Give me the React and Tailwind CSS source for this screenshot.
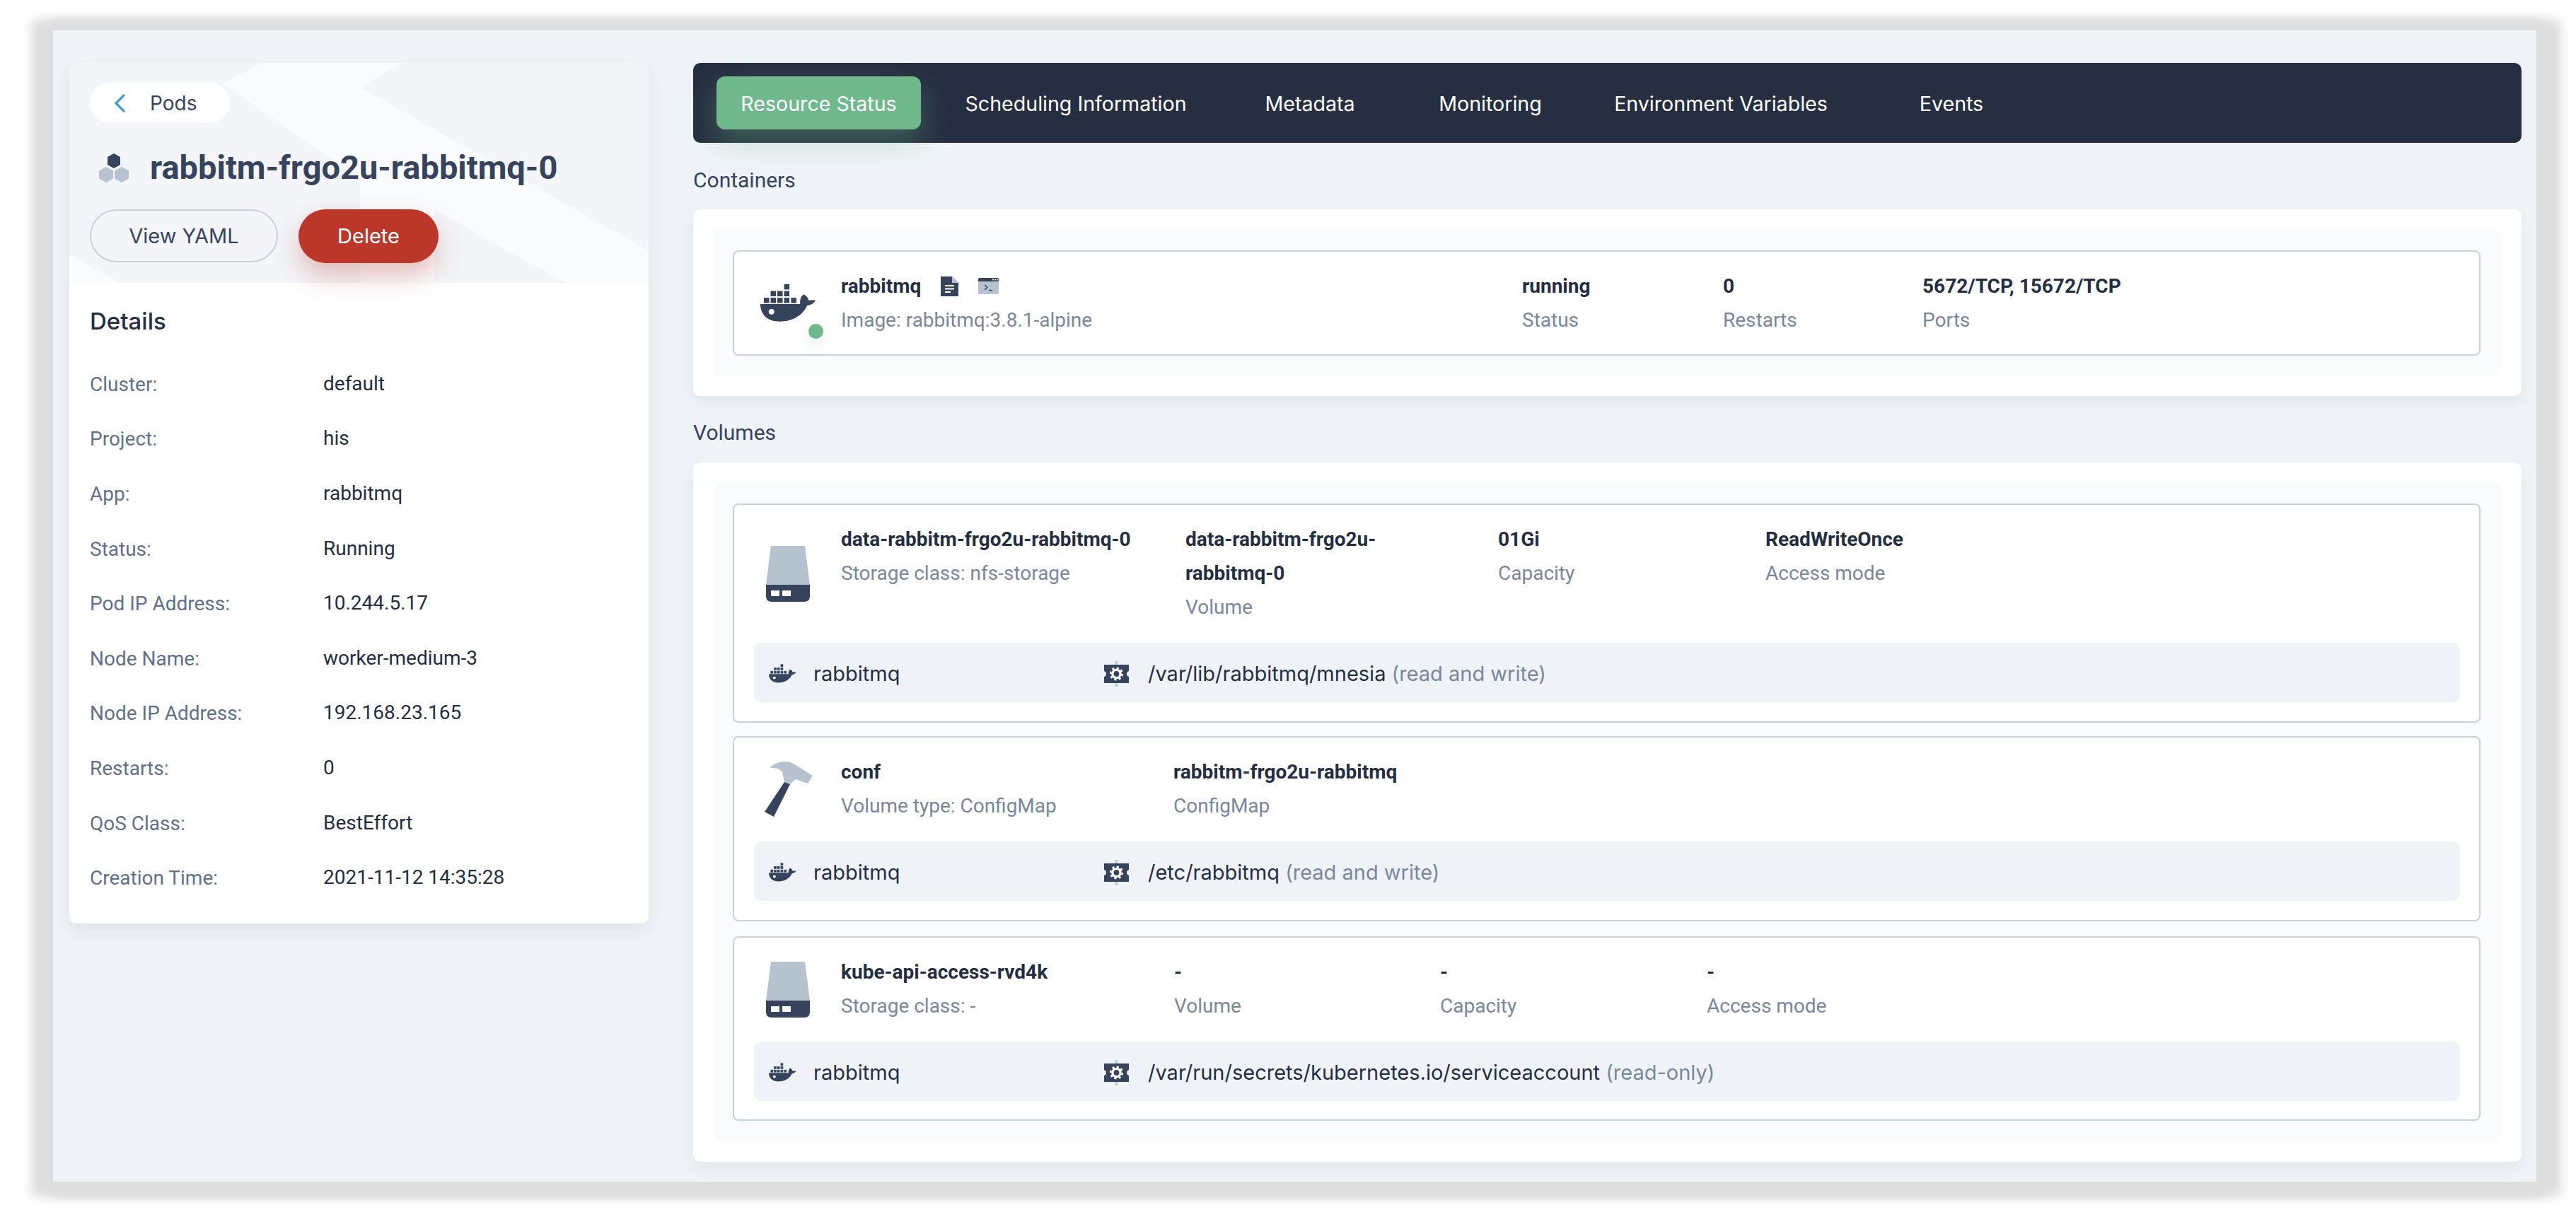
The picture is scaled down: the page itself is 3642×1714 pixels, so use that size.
import React from "react";

const Docker = ({ className }) => (
  <svg viewBox="0 0 80 55" className={className}>
    <g fill="#36435c">
      <rect x="5" y="20" width="7.6" height="7.6" />
      <rect x="14.7" y="20" width="7.6" height="7.6" />
      <rect x="24.3" y="20" width="7.6" height="7.6" />
      <rect x="34" y="20" width="7.6" height="7.6" />
      <rect x="44" y="20" width="7.6" height="7.6" />
      <rect x="14.7" y="10.3" width="7.6" height="7.6" />
      <rect x="24.3" y="10.3" width="7.6" height="7.6" />
      <rect x="34" y="10.3" width="7.6" height="7.6" />
      <rect x="34" y="0.5" width="7.6" height="7.6" />
      <path d="M0 29H57C56 24 58 18 62 15C66 17 69 21 69 24C72 23 76 23 79 24C76 29 71 31 67 31C62 43 48 54 28 54C10 54 0 44 0 29Z" />
    </g>
    <circle cx="16" cy="40" r="4" fill="#fff" />
  </svg>
);

const Disk = () => (
  <svg viewBox="0 0 62 79" className="w-[62px] h-[79px] ml-[45px]">
    <path d="M7 0H55L62 55H0Z" fill="#b6c2cd" />
    <path d="M0 55H62V71Q62 79 54 79H8Q0 79 0 71Z" fill="#36435c" />
    <rect x="7" y="63" width="12" height="8" fill="#fff" />
    <rect x="23" y="63" width="12" height="8" fill="#fff" />
  </svg>
);

const Hammer = () => (
  <svg viewBox="0 0 70 79" className="w-[70px] h-[79px] ml-[42px]">
    <path d="M8 9C18 -1 32 -2 42 3L69 20L62 31L45 25L37 32L29 29L26 15C22 10 15 8 8 9Z" fill="#b6c2cd" />
    <path d="M29 29L37 32L14 78L1 71Z" fill="#36435c" />
  </svg>
);

const Gear = () => (
  <svg viewBox="0 0 37 36" className="w-[37px] h-[36px] shrink-0">
    <rect x="16.5" y="0" width="4" height="36" fill="#c3ccd6" />
    <path d="M1 5H36V14Q33 15 33 18Q33 21 36 22V31H1V22Q4 21 4 18Q4 15 1 14Z" fill="#36435c" />
    <circle cx="18.5" cy="18" r="5.6" fill="none" stroke="#fff" strokeWidth="3.4" />
    <circle cx="18.5" cy="18" r="8.3" fill="none" stroke="#fff" strokeWidth="2.6" strokeDasharray="3.2 3.3" />
  </svg>
);

const Pod = () => (
  <svg viewBox="0 0 42 41" className="w-[42px] h-[41px]">
    <path d="M21 0L30 5V16L21 21L12 16V5Z" fill="#36435c" />
    <path d="M10 19L20 24.5V35.5L10 41L0 35.5V24.5Z" fill="#b6c2cd" />
    <path d="M32 19L42 24.5V35.5L32 41L22 35.5V24.5Z" fill="#b6c2cd" />
  </svg>
);

const Stat = ({ value, label, className }) => (
  <div className={className}>
    <div className="text-[28px] leading-[48px] font-bold text-[#242e42] whitespace-nowrap">{value}</div>
    <div className="text-[28px] leading-[48px] text-[#79879c] whitespace-nowrap">{label}</div>
  </div>
);

const MountBar = ({ path, mode }) => (
  <div className="mt-[26px] ml-[28px] mr-[27px] h-[84px] pt-[3px] bg-[#eff3f7] rounded-[10px] flex items-center text-[29px] text-[#242e42] [font-family:Inter,sans-serif]">
    <div className="w-[494px] flex items-center pl-[21px] gap-[24px] shrink-0">
      <Docker className="w-[39px] h-[29px]" />
      <span>rabbitmq</span>
    </div>
    <Gear />
    <span className="ml-[26px] whitespace-nowrap">
      {path} <span className="text-[#79879c]">{mode}</span>
    </span>
  </div>
);

const details = [
  ["Cluster:", "default"],
  ["Project:", "his"],
  ["App:", "rabbitmq"],
  ["Status:", "Running"],
  ["Pod IP Address:", "10.244.5.17"],
  ["Node Name:", "worker-medium-3"],
  ["Node IP Address:", "192.168.23.165"],
  ["Restarts:", "0"],
  ["QoS Class:", "BestEffort"],
  ["Creation Time:", "2021-11-12 14:35:28"],
];

const tabs = [
  ["Scheduling Information", "w-[438px]"],
  ["Metadata", "w-[224px]"],
  ["Monitoring", "w-[286px]"],
  ["Environment Variables", "w-[366px]"],
  ["Events", "w-[286px]"],
];

export default function App() {
  return (
    <div className="w-[3642px] h-[1714px] bg-white overflow-hidden pt-[43px] pl-[75px] [font-family:Roboto,sans-serif]">
      <div className="w-[3511px] h-[1628px] bg-[#eff3f7] pt-[46px] pl-[23px] flex gap-[63px] shadow-[2px_3px_14px_17px_#dedede,-14px_3px_14px_17px_#dedede,18px_3px_14px_17px_#dedede]">
        {/* Left column */}
        <div className="w-[819px] h-[1217px] flex flex-col rounded-[10px] shadow-[0_10px_20px_rgba(36,46,66,0.07)]">
          <div className="relative z-10 h-[311px] pl-[29px] pt-[28px] [font-family:Inter,sans-serif]">
            <div className="absolute inset-0 overflow-hidden rounded-t-[10px] bg-[#f3f5f9]">
              <svg viewBox="0 0 820 311" className="w-full h-full">
                <path d="M273 0H472L412 34L820 266V311H702L518 208V311H412V164L217 29Z" fill="#fafbfd" />
                <path d="M0 271L72 311H0Z" fill="#fafbfd" />
              </svg>
            </div>
            <div className="relative">
              <div className="w-[198px] h-[57px] rounded-full bg-white flex items-center pl-[35px] gap-[35px] text-[28px] text-[#36435c]">
                <svg viewBox="0 0 15 26" className="w-[15px] h-[26px]">
                  <path d="M14 1L2 13L14 25" fill="none" stroke="#3f9dd0" strokeWidth="3.2" />
                </svg>
                <span>Pods</span>
              </div>
              <div className="mt-[33px] h-[60px] flex items-center pl-[13px] gap-[30px]">
                <Pod />
                <h1 className="text-[47px] leading-[60px] font-bold text-[#36435c] whitespace-nowrap [font-family:Roboto,sans-serif]">rabbitm-frgo2u-rabbitmq-0</h1>
              </div>
              <div className="mt-[29px] flex gap-[29px] text-[29px]">
                <div className="w-[266px] h-[75px] rounded-full border-2 border-[#c9d1db] flex items-center justify-center text-[#36435c]">View YAML</div>
                <div className="w-[198px] h-[76px] rounded-full bg-[#ba372a] text-white flex items-center justify-center shadow-[0_18px_36px_rgba(186,55,42,0.3)]">Delete</div>
              </div>
            </div>
          </div>
          <div className="flex-1 bg-white rounded-b-[10px] pt-[30px] pl-[29px]">
            <h2 className="text-[33px] leading-[48px] font-medium text-[#242e42] [font-family:Inter,sans-serif]">Details</h2>
            <div className="mt-[26px]">
              {details.map(([k, v]) => (
                <div key={k} className="h-[77.6px] flex items-center text-[28px]">
                  <span className="w-[330px] text-[#5f708a] mt-[2px]">{k}</span>
                  <span className="text-[#242e42]">{v}</span>
                </div>
              ))}
            </div>
          </div>
        </div>

        {/* Right column */}
        <div className="w-[2585px] flex flex-col">
          <div className="h-[113px] bg-[#262f41] rounded-[10px] flex items-center pl-[33px] text-[28.6px] text-white [font-family:Inter,sans-serif]">
            <div className="w-[289px] h-[75px] pt-[3px] rounded-[12px] bg-[#6fb98d] flex items-center justify-center shadow-[0_18px_40px_rgba(111,185,141,0.35)]">Resource Status</div>
            {tabs.map(([t, w]) => (
              <div key={t} className={`${w} pt-[3px] text-center whitespace-nowrap`}>{t}</div>
            ))}
          </div>

          <h2 className="mt-[29px] text-[30px] leading-[48px] text-[#36435c]">Containers</h2>
          <div className="mt-[17px] h-[264px] bg-white rounded-[10px] pt-[29px] pr-[29px] pb-[28px] pl-[28px] shadow-[0_10px_20px_rgba(36,46,66,0.06)]">
            <div className="h-full bg-[#f9fbfd] rounded-[10px] pt-[29px] pr-[29px] pb-[29px] pl-[28px]">
              <div className="h-[149px] bg-white border-2 border-[#c9d1db] rounded-[8px] flex items-center">
                <div className="relative w-[151px] shrink-0 pl-[37px]">
                  <Docker className="w-[79px] h-[55px]" />
                  <span className="absolute left-[105px] top-[57px] w-[21px] h-[21px] rounded-full bg-[#6fb98d] shadow-[0_8px_20px_rgba(111,185,141,0.25)]" />
                </div>
                <div className="w-[963px] shrink-0">
                  <div className="flex items-center h-[48px]">
                    <span className="text-[28px] font-bold text-[#242e42]">rabbitmq</span>
                    <svg viewBox="0 0 25 28" className="w-[25px] h-[28px] ml-[28px]">
                      <path d="M0 0H16L25 9V28H0Z" fill="#36435c" />
                      <path d="M16 0L25 9H16Z" fill="#b6c2cd" />
                      <path d="M6 13H19M6 17.5H19M6 22H14" stroke="#fff" strokeWidth="2" />
                    </svg>
                    <svg viewBox="0 0 29 23" className="w-[29px] h-[23px] ml-[28px]">
                      <rect width="29" height="23" rx="2" fill="#b6c2cd" />
                      <path d="M0 2Q0 0 2 0H27Q29 0 29 2V5H0Z" fill="#36435c" />
                      <circle cx="21" cy="2.5" r="1" fill="#fff" />
                      <circle cx="24" cy="2.5" r="1" fill="#fff" />
                      <circle cx="27" cy="2.5" r="1" fill="#fff" />
                      <path d="M9 10L13 13.5L9 17M15 17.5H20" fill="none" stroke="#36435c" strokeWidth="1.5" />
                    </svg>
                  </div>
                  <div className="text-[28px] leading-[48px] text-[#79879c]">Image: rabbitmq:3.8.1-alpine</div>
                </div>
                <Stat value="running" label="Status" className="w-[284px] shrink-0" />
                <Stat value="0" label="Restarts" className="w-[282px] shrink-0" />
                <Stat value="5672/TCP, 15672/TCP" label="Ports" className="shrink-0" />
              </div>
            </div>
          </div>

          <h2 className="mt-[28px] text-[30px] leading-[48px] text-[#36435c]">Volumes</h2>
          <div className="mt-[18px] h-[989px] bg-white rounded-[10px] pt-[29px] pr-[29px] pb-[29px] pl-[28px] shadow-[0_10px_20px_rgba(36,46,66,0.06)]">
            <div className="h-full bg-[#f9fbfd] rounded-[10px] pt-[29px] pr-[29px] pb-[29px] pl-[28px]">
              {/* Volume 1 */}
              <div className="h-[310px] bg-white border-2 border-[#c9d1db] rounded-[8px] pt-[25px]">
                <div className="flex items-center h-[144px]">
                  <div className="w-[151px] shrink-0"><Disk /></div>
                  <div className="flex items-start">
                    <Stat value="data-rabbitm-frgo2u-rabbitmq-0" label="Storage class: nfs-storage" className="w-[487px] shrink-0" />
                    <div className="w-[442px] shrink-0">
                      <div className="w-[300px] text-[28px] leading-[48px] font-bold text-[#242e42]">data-rabbitm-frgo2u-rabbitmq-0</div>
                      <div className="text-[28px] leading-[48px] text-[#79879c]">Volume</div>
                    </div>
                    <Stat value="01Gi" label="Capacity" className="w-[378px] shrink-0" />
                    <Stat value="ReadWriteOnce" label="Access mode" className="shrink-0" />
                  </div>
                </div>
                <MountBar path="/var/lib/rabbitmq/mnesia" mode="(read and write)" />
              </div>
              {/* Volume 2 */}
              <div className="mt-[19px] h-[262px] bg-white border-2 border-[#c9d1db] rounded-[8px] pt-[25px]">
                <div className="flex items-center h-[96px]">
                  <div className="w-[151px] shrink-0"><Hammer /></div>
                  <Stat value="conf" label="Volume type: ConfigMap" className="w-[470px] shrink-0" />
                  <Stat value="rabbitm-frgo2u-rabbitmq" label="ConfigMap" className="shrink-0" />
                </div>
                <MountBar path="/etc/rabbitmq" mode="(read and write)" />
              </div>
              {/* Volume 3 */}
              <div className="mt-[21px] h-[261px] bg-white border-2 border-[#c9d1db] rounded-[8px] pt-[25px]">
                <div className="flex items-center h-[96px]">
                  <div className="w-[151px] shrink-0"><Disk /></div>
                  <Stat value="kube-api-access-rvd4k" label="Storage class: -" className="w-[471px] shrink-0" />
                  <Stat value="-" label="Volume" className="w-[376px] shrink-0" />
                  <Stat value="-" label="Capacity" className="w-[377px] shrink-0" />
                  <Stat value="-" label="Access mode" className="shrink-0" />
                </div>
                <MountBar path="/var/run/secrets/kubernetes.io/serviceaccount" mode="(read-only)" />
              </div>
            </div>
          </div>
        </div>
      </div>
    </div>
  );
}
